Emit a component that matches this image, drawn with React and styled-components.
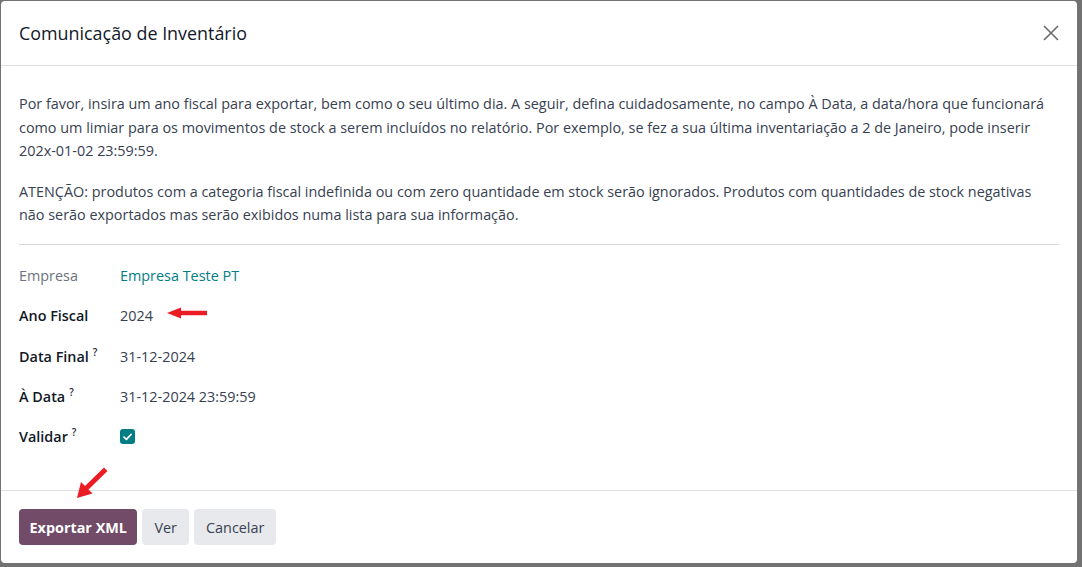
import React from "react";
import styled, { createGlobalStyle } from "styled-components";

const GlobalStyle = createGlobalStyle`
  html, body { margin: 0; padding: 0; }
  body {
    background: #727272;
    font-family: "Open Sans", "Noto Sans", sans-serif;
    -webkit-font-smoothing: antialiased;
  }
  * { box-sizing: border-box; }
`;

const Backdrop = styled.div`
  width: 1082px;
  height: 567px;
  padding: 1px 0 0 1px;
  background: #727272;
  position: relative;
  overflow: hidden;
`;

const Modal = styled.div`
  width: 1076px;
  height: 562px;
  background: #fff;
  border-radius: 4px;
  display: flex;
  flex-direction: column;
  color: #374151;
`;

const Header = styled.div`
  height: 65px;
  flex: none;
  display: flex;
  align-items: center;
  justify-content: space-between;
  padding: 0 16px 0 18px;
  border-bottom: 1px solid #dcdfe3;
`;

const Title = styled.h4`
  margin: 0;
  font-size: 17.9px;
  font-weight: 500;
  color: #111827;
`;

const Close = styled.button`
  border: none;
  background: none;
  padding: 0;
  width: 20px;
  height: 20px;
  display: flex;
  align-items: center;
  justify-content: center;
  cursor: pointer;
`;

const Body = styled.div`
  flex: 1;
  padding: 26px 20px 0 18px;
  font-size: 14.4px;
  line-height: 23.5px;
`;

const Para = styled.p`
  margin: 0 0 17px 0;
`;

const Rule = styled.hr`
  border: none;
  border-top: 1px solid #d3d6da;
  margin: 16px -2px 19.5px 0;
`;

const Form = styled.div`
  display: grid;
  grid-template-columns: 101px 1fr;
  grid-auto-rows: 40.25px;
  align-items: start;
`;

const Label = styled.div`
  font-weight: ${(p) => (p.$muted ? 400 : 600)};
  color: ${(p) => (p.$muted ? "#6b7280" : "#111827")};
  line-height: 23.5px;
`;

const Help = styled.sup`
  font-size: 10px;
  font-weight: 600;
  color: #1f2937;
  margin-left: 4px;
  vertical-align: 6px;
  line-height: 0;
`;

const Value = styled.div`
  color: ${(p) => (p.$link ? "#017e84" : "#374151")};
  line-height: 23.5px;
  display: flex;
  align-items: center;
  min-height: 23.5px;
`;

const Check = styled.span`
  width: 15px;
  height: 15px;
  border-radius: 3px;
  background: #017e84;
  display: inline-flex;
  align-items: center;
  justify-content: center;
`;

const Footer = styled.div`
  flex: none;
  height: 73px;
  border-top: 1px solid #dcdfe3;
  padding: 18px 18px 0 18px;
  display: flex;
  align-items: flex-start;
  gap: 5px;
`;

const Button = styled.button`
  height: 36px;
  border: none;
  border-radius: 4px;
  padding: ${(p) => (p.$primary ? "0 10.5px" : "0 12px")};
  font-family: inherit;
  font-size: 14.4px;
  font-weight: ${(p) => (p.$primary ? 700 : 500)};
  background: ${(p) => (p.$primary ? "#714b67" : "#e7e9ed")};
  color: ${(p) => (p.$primary ? "#ffffff" : "#374151")};
  cursor: pointer;
`;

const Annotation = styled.svg`
  position: absolute;
  left: ${(p) => p.$x}px;
  top: ${(p) => p.$y}px;
  pointer-events: none;
`;

export default function App() {
  return (
    <>
      <GlobalStyle />
      <Backdrop>
        <Modal>
          <Header>
            <Title>Comunicação de Inventário</Title>
            <Close aria-label="Fechar">
              <svg width="16" height="16" viewBox="0 0 16 16">
                <path d="M1 1L15 15M15 1L1 15" stroke="#6b6b6b" strokeWidth="1.6" />
              </svg>
            </Close>
          </Header>
          <Body>
            <Para>
              Por favor, insira um ano fiscal para exportar, bem como o seu último dia. A seguir, defina cuidadosamente, no campo À Data, a data/hora que funcionará como um limiar para os movimentos de stock a serem incluídos no relatório. Por exemplo, se fez a sua última inventariação a 2 de Janeiro, pode inserir 202x-01-02 23:59:59.
            </Para>
            <Para>
              ATENÇÃO: produtos com a categoria fiscal indefinida ou com zero quantidade em stock serão ignorados. Produtos com quantidades de stock negativas não serão exportados mas serão exibidos numa lista para sua informação.
            </Para>
            <Rule />
            <Form>
              <Label $muted>Empresa</Label>
              <Value $link>Empresa Teste PT</Value>
              <Label>Ano Fiscal</Label>
              <Value>2024</Value>
              <Label>
                Data Final<Help>?</Help>
              </Label>
              <Value>31-12-2024</Value>
              <Label>
                À Data<Help>?</Help>
              </Label>
              <Value>31-12-2024 23:59:59</Value>
              <Label>
                Validar<Help>?</Help>
              </Label>
              <Value>
                <Check>
                  <svg width="9" height="8" viewBox="0 0 9 8">
                    <path d="M1 4.2L3.4 6.4L8 1.5" stroke="#fff" strokeWidth="1.8" fill="none" strokeLinecap="round" strokeLinejoin="round" />
                  </svg>
                </Check>
              </Value>
            </Form>
          </Body>
          <Footer>
            <Button $primary>Exportar XML</Button>
            <Button>Ver</Button>
            <Button>Cancelar</Button>
          </Footer>
        </Modal>
        <Annotation $x={167} $y={307} width="42" height="12" viewBox="0 0 42 12">
          <path d="M0 6L14 0.5V3.8H40V8.2H14V11.5Z" fill="#ec1c24" />
        </Annotation>
        <Annotation $x={74} $y={466} width="36" height="34" viewBox="0 0 36 34">
          <path d="M3 32L7 16L11 20L30 1.5L33.5 5L14.5 23.5L18.5 27.5Z" fill="#ec1c24" />
        </Annotation>
      </Backdrop>
    </>
  );
}
